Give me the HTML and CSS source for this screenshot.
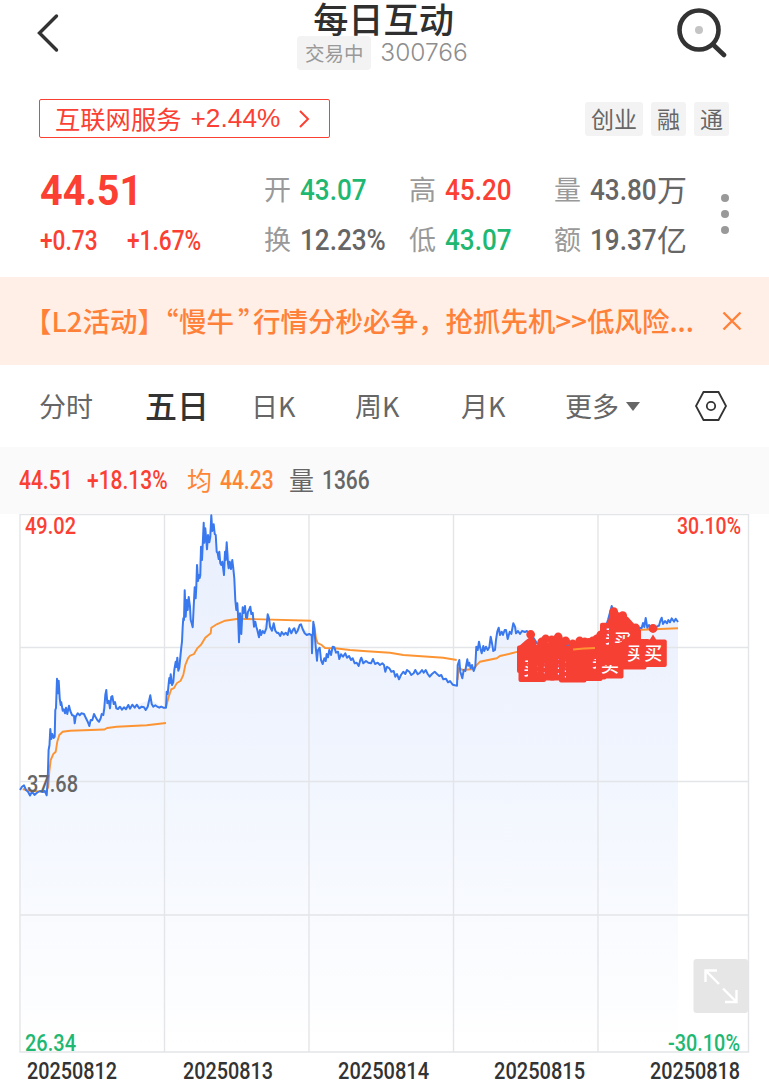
FILE: index.html
```html
<!DOCTYPE html>
<html lang="zh-CN">
<head>
  <meta charset="UTF-8">
  <title>每日互动 300766</title>
  <link rel="stylesheet" href="styles.css">
</head>
<body>

  <header class="top-bar">
    <svg class="back-icon" width="24" height="40" viewBox="0 0 24 40">
      <path d="M20.500 3 L3.500 20 L20.500 37" />
    </svg>
    <div class="stock-title">
      <h1>每日互动</h1>
      <div class="stock-sub">
        <span class="trade-status">交易中</span>
        <span class="stock-code">300766</span>
      </div>
    </div>
    <svg class="search-icon" width="54" height="54" viewBox="0 0 54 54">
      <circle class="ring" cx="25" cy="26" r="19.5" />
      <path d="M39.500 41 L50 51" />
      <circle class="dot" cx="25" cy="26" r="4" />
    </svg>
  </header>

  <div class="tag-row">
    <div class="sector">
      <span class="sector-name">互联网服务</span>
      <span class="sector-change">+2.44%</span>
      <svg width="12" height="20" viewBox="0 0 12 20"><path d="M2 2 L10 10 L2 18" /></svg>
    </div>
    <div class="tags">
      <span>创业</span>
      <span>融</span>
      <span>通</span>
    </div>
  </div>

  <section class="quote">
    <div class="price-box">
      <div class="price"><span class="num">44.51</span></div>
      <div class="change">
        <span class="num">+0.73</span>
        <span class="num">+1.67%</span>
      </div>
    </div>
    <div class="quote-grid">
      <label>开</label><span class="num green">43.07</span>
      <label>高</label><span class="num red">45.20</span>
      <label>量</label><div class="with-unit"><span class="num">43.80</span><b>万</b></div>
      <label>换</label><span class="num">12.23%</span>
      <label>低</label><span class="num green">43.07</span>
      <label>额</label><div class="with-unit"><span class="num">19.37</span><b>亿</b></div>
    </div>
    <div class="more-dots"><i></i><i></i><i></i></div>
  </section>

  <div class="banner">
    <p>【L2活动】<span class="quote-open">“</span>慢牛<span class="quote-close">”</span>行情分秒必争，抢抓先机&gt;&gt;低风险...</p>
    <svg width="20" height="20" viewBox="0 0 20 20"><path d="M1.500 1.500 L18.500 18.500 M18.500 1.500 L1.500 18.500" /></svg>
  </div>

  <nav class="tabs">
    <a>分时</a>
    <a class="active">五日</a>
    <a>日K</a>
    <a>周K</a>
    <a>月K</a>
    <a class="more">更多<i></i></a>
    <svg width="34" height="32" viewBox="0 0 34 32">
      <path d="M9.500 2 H24.500 L32 16 L24.500 30 H9.500 L2 16 Z" />
      <circle cx="17" cy="16" r="4.200" />
    </svg>
  </nav>

  <div class="info-bar">
    <span class="num red info-price">44.51</span>
    <span class="num red info-change">+18.13%</span>
    <span class="orange info-label">均</span>
    <span class="num orange info-avg">44.23</span>
    <span class="info-label">量</span>
    <span class="num">1366</span>
  </div>

  <svg class="chart" width="769" height="570" viewBox="0 514 769 570">
    <defs>
      <linearGradient id="area" x1="0" y1="514" x2="0" y2="1052" gradientUnits="userSpaceOnUse">
        <stop offset="0" stop-color="#e9effd" />
        <stop offset="0.4" stop-color="#eff4fe" />
        <stop offset="1" stop-color="#ffffff" />
      </linearGradient>
      <g id="buy">
        <circle cx="13.700" cy="-11" r="4.400" />
        <path d="M10 1 L13.700 -5 L17.500 1 Z" />
        <rect width="27.500" height="27.500" rx="2" />
        <text x="5" y="20.500">买</text>
      </g>
    </defs>

    <path class="area" d="M20 790 L26 790 30 795 46.700 795 48.600 750 50.300 729 54.700 737 57 679 60.700 705 67.300 714 74.700 717 84 714 89.300 726 100 718 106.300 692 110 706 116 706 130 707 150 700 166 707.700 170 683 177.300 661 181.300 647 184.700 600 188.700 600 192.700 627 197 570 201 550 203.700 527 207 545 211.300 520 216.700 551.700 221.300 565 226.700 545 233.300 568 236.300 610 240 618 250 608 259 635 267.700 618 273 628 280 635 301 626 311.700 635 314 630 317 658 322.700 663 332.700 647 345 655 358 665 361 658 380 665 399 678 420 671 440 676 457 685.700 459.300 662 462.300 677 467.300 661 473.700 670 476.300 647 493.300 650 498.700 630 507.700 638 513.300 625 527 632 540 645 585 647 600 635 611.700 608 630 627 645 625 678 622 V1052 H20 Z" />

    <g class="grid">
      <path d="M20 514.500 H748.500 V1052 H20 Z" />
      <path d="M20 647.500 H748 M20 781.500 H748 M20 915 H748" />
      <path d="M164.500 514 V1052 M309 514 V1052 M453.500 514 V1052 M598 514 V1052" />
    </g>

    <g class="avg-line">
      <path d="M22.700 789 L30 791 46 791.700 48.300 786.700 49.300 771.700 50.700 760 53.300 754 55.700 751.700 57.300 741.700 59.300 735 62.700 731.700 70 730.700 104.300 729.500 107.300 728 116.700 726.700 146.700 725.300 166 723" />
      <path d="M166 707 L168.700 696.700 171.300 689.300 174 688 176.700 683.300 180.700 680.700 183.300 675 185.300 665 188 658.300 190 655.700 194 654 197.300 648.300 201.300 644.300 205.300 637.700 210.700 633.300 211.300 627.700 216.700 624.300 225 620.700 238.300 618.700 311.300 620.700" />
      <path d="M314 624 L316 638.300 317.700 643 321.700 645 325 648 335 648.300 350 650 366.700 651.300 390 652.700 403.300 655 443.300 657.700 456.700 660" />
      <path d="M457.500 680 L458.700 668.300 463.300 670 473.300 669 476.700 665 480 661.700 496.700 658.300 500 656 511.700 653.300 518 651.700 545 651" />
      <path d="M636 630 L678 628.300" />
    </g>

    <g class="price-line">
      <path d="M20 790 L22 786.700 24 785.300 26 790 28 791.700 30 795.500 32 791.700 34.500 795 37.300 792.500 40 791 42.700 792 44.700 791 46.700 795.300 47.700 780 48.600 750 49.500 745 50.300 729 51.300 739 52.300 734 53.700 738 54.700 736.700 55.300 710 56 708 57 678.700 57.700 693.300 58.700 680.700 59.700 698.300 60.700 705 61.300 702.300 62.700 710.700 63.700 709.300 65 713.300 66 707.700 67.300 714 69 705.700 70.300 711 72 715 74 716 74.700 723.300 75.700 716.700 77.700 713.300 79.700 715.300 81.300 713.300 84 714 86 718.300 87.700 721.700 89.300 726 90.700 720 92.300 720.300 94 714 95.700 717.300 97.300 720 99 721.700 100.700 718.300 101.700 714 103.300 715 104.300 708.300 105.300 695 106.300 690 107.300 703.300 108.700 700.700 110 708.300 111.300 696.700 112.300 696 113.700 704 115 702 116.300 708.300 118 709 120 706.700 122 709.700 124 707.300 126 709.300 128.300 705 130 708.700 132.300 704.700 134.700 707.700 136.700 704.700 139.300 708.300 141.700 706.700 144 707.300 145.700 710 147.700 706.700 150.300 695.300 151.700 704 153.300 706.700 155.300 705.300 157.300 706.700 159.300 707.700 161.300 706.700 163.300 707.700 166 707.700 166.700 691.700 167.700 694 168.700 683.300 169.300 678 170 683 170.700 674.300 172 685 173.300 682 174.300 670 175.700 661.700 176.500 667 177.300 657.700 178.300 670.700 179.300 668 180.700 653.300 181.300 647.300 182 641.700 182.700 626.700 183.300 618.300 184 620 184.700 590.300 185.700 616.700 186.700 600 187.700 610 188.700 597 190 606.700 190.700 620 191.700 623.300 192.700 627.300 193.700 606.700 194.700 587.300 195.700 598.300 196.300 586.700 197 565 198 581 199 575 199.700 578 200.300 575 201 546.700 202 560 202.700 545 203.700 522.700 204.300 542.700 205.300 528.300 206.300 540 207 549.300 208 535 209.300 542.300 210.300 536.700 211.300 515.300 212.300 531 213.700 524.300 214.700 534 215.700 535 216.700 551.700 217.700 553.300 218.700 559 219.300 551.700 220.300 563.300 221.300 565 222.300 561.700 224 575 225 551.700 225.700 560 226.700 542.300 228 563.300 228.700 568.300 229.700 561.700 231 569 232.300 560 233.300 568.300 234.300 578.300 235.300 600 236.300 610 237.300 603.300 238 614 239 642.300 240 613.300 241.300 634 242 620 242.700 607.300 243.700 613 245 606 246 617.300 247 618 248 611.700 249 610 250.300 606.700 251.300 614 252.700 612.700 254 626.700 255.300 621.700 256.300 626.700 257.300 630 259 637.300 260 630 261 635 262.700 631 264.300 633.300 266.300 628.300 267.700 614.300 269 618.300 270 626.700 272 630.700 273.700 623.300 275.300 630.700 277 633 278.300 632.700 280.300 636 281.700 632 283.700 634.700 285.700 632.700 287.700 635 289.300 628.300 291.300 633.300 293.300 629.300 294.300 628.300 296 633.300 297.700 630.700 299.700 625 301 624.300 302.700 629.300 304.700 633.300 306.700 635 309.300 634 311.700 635.300 312 653.300 313.300 621.700 314.300 628.300 315.700 646.700 317 660.700 318 650 319.700 647.700 321 660 322.700 664 324.300 658.300 325.700 661 326.700 654 328 657.300 329.300 650 331 655 332.700 646.700 334.300 647.300 336 652.700 338 651.700 339.300 659 341 654.300 343 656.700 345.300 653.300 347 657.700 349 656 351 660 352.700 658.300 354.700 663.300 356.700 662.700 358.700 666 360.300 660 361.300 657.700 363.300 663.300 366 661 368.300 662.700 371 663.300 373 659 375 664 377.700 662.700 380 665 382.300 663.300 384 665 385.300 671.700 387 666.700 389.300 668.300 391.300 671.700 393.700 671 395.300 676.700 397 674 399 679.300 401 675 403.300 671.700 405.300 674 407 670 409.300 671.700 411.300 675 413.700 673.300 415.300 670 417.700 674.300 420 672.700 422 670 423.700 672.700 425.700 670 427.700 674 429.700 676.700 432 674 434.700 671.700 437 674 439.300 676 441.300 675 443.300 679.300 446 678.700 448 682.300 450 681 452.700 684.700 455 685.300 457 685.700 457.700 665 459.300 660 460.300 671.700 462.300 678.300 463.700 670 465.300 671 466.300 665 467.300 659.300 468.300 665.700 469.300 662.700 470.700 668.300 472 665 473.700 671 475.300 666.700 476.300 646.700 477.700 650 479 641.700 480.300 648.300 481.700 653.300 483.300 646 484.300 651 486 646.700 487.700 650 489.300 647.300 490.700 636.700 492 643.300 493.300 651 495 650 496 640 497.300 631.700 498.700 627.700 500 635 501.700 631.700 503 635 504.700 630 506 630 507.700 639 509.700 631.700 511.300 634 513.300 623.300 515 626.700 516 633.300 518 631 520 634 522 631 525 632 527 631 530 635 533 637 536.700 643 541 646 550 644 560 646 570 645 578 648 585 645 595 642 604 632 608 620 611.700 606 614 612 618 618 622 614 627.700 623 630 627 638 628 641.700 628 643 623 644.300 627 645.700 618 647.300 627.700 649 625 651.700 628.300 656.700 626.700 659 625.700 660.300 621 661.700 617.700 663 624 665 621 667 623.300 668.300 620 670 622.300 671.700 618.300 674 621.700 675.700 618.700 678 622" />
    </g>

    <g class="markers">
      <use href="#buy" x="517" y="645.500" />
      <use href="#buy" x="518.500" y="654.500" />
      <use href="#buy" x="528" y="653" />
      <use href="#buy" x="532" y="650" />
      <use href="#buy" x="538" y="651" />
      <use href="#buy" x="544.500" y="648" />
      <use href="#buy" x="549" y="653" />
      <use href="#buy" x="552" y="652" />
      <use href="#buy" x="559" y="655" />
      <use href="#buy" x="566" y="652" />
      <use href="#buy" x="571" y="653" />
      <use href="#buy" x="575" y="653.500" />
      <use href="#buy" x="579" y="652" />
      <use href="#buy" x="583" y="650" />
      <use href="#buy" x="587" y="646" />
      <use href="#buy" x="596" y="651" />
      <path class="cluster" d="M518 647 L526 640 533 635 536 645 544 642 552 643 559 637 564 645 573 647 580 642 588 645 597 638 603 628 V659 H518 Z M603 638 L610 614 618 612 628 617 637 627 641 630 V642 L619 646 V664 H603 Z" />
      <use href="#buy" x="600" y="622.700" />
      <use href="#buy" x="609" y="626.700" />
      <path class="cluster" d="M599 645 H619 V665 H599 Z" />
      <use href="#buy" x="619" y="642" />
      <use href="#buy" x="622" y="639" />
      <use href="#buy" x="639.300" y="639.500" />
      <path class="avg-over" d="M573 649.500 L584 648.500 L595 648" />
    </g>

    <g class="axis">
      <text class="up" x="25" y="534" textLength="51" lengthAdjust="spacingAndGlyphs">49.02</text>
      <text class="up" x="677" y="534" textLength="64" lengthAdjust="spacingAndGlyphs">30.10%</text>
      <text class="mid" x="27" y="792" textLength="51" lengthAdjust="spacingAndGlyphs">37.68</text>
      <text class="down" x="25" y="1050.500" textLength="51" lengthAdjust="spacingAndGlyphs">26.34</text>
      <text class="down" x="668" y="1050.500" textLength="72" lengthAdjust="spacingAndGlyphs">-30.10%</text>
    </g>

    <g class="dates">
      <text x="27" y="1078.500" textLength="90" lengthAdjust="spacingAndGlyphs">20250812</text>
      <text x="183" y="1078.500" textLength="90" lengthAdjust="spacingAndGlyphs">20250813</text>
      <text x="338" y="1078.500" textLength="91" lengthAdjust="spacingAndGlyphs">20250814</text>
      <text x="494" y="1078.500" textLength="91" lengthAdjust="spacingAndGlyphs">20250815</text>
      <text x="650" y="1078.500" textLength="90" lengthAdjust="spacingAndGlyphs">20250818</text>
    </g>

    <g class="expand">
      <rect x="693.500" y="959" width="54.500" height="54" rx="3" />
      <path d="M719 984 L705.500 970.500 M705.500 982 V970.500 H717 M723 988.500 L736.500 1002 M736.500 990 V1002 H725" />
    </g>
  </svg>

</body>
</html>
```
FILE: styles.css
```css
* {
  margin: 0;
  padding: 0;
  box-sizing: border-box;
}

body {
  width: 769px;
  background-color: #fff;
  color: #666;
  font-family: "Noto Sans CJK SC", sans-serif;
  overflow: hidden;
}

svg {
  display: block;
  flex-shrink: 0;
  fill: none;
}

/* narrow digits */
.num {
  display: block;
  font-family: Roboto, sans-serif;
  font-weight: 500;
  white-space: nowrap;
  transform: scaleX(0.84);
  transform-origin: left center;
}

.red {
  color: #fb4033;
}

.green {
  color: #1fb872;
}

.orange {
  color: #ff8534;
}

/* header */
.top-bar {
  display: flex;
  justify-content: space-between;
  height: 85px;
  padding: 0 41px 0 36px;
}

.back-icon {
  margin-top: 13px;
  stroke: #333;
  stroke-width: 3.4;
  stroke-linecap: round;
}

.stock-title {
  display: flex;
  flex-direction: column;
  align-items: center;
  margin-left: 31px;
}

.stock-title h1 {
  margin-left: 2px;
  font-size: 35.2px;
  font-weight: 500;
  line-height: 35px;
  color: #2f2f2f;
}

.stock-sub {
  display: flex;
  align-items: center;
  gap: 9px;
}

.trade-status {
  width: 74px;
  height: 34px;
  border-radius: 4px;
  background-color: #f3f3f3;
  color: #999;
  font-size: 19.5px;
  line-height: 34px;
  text-align: center;
}

.stock-code {
  font-family: Inter, sans-serif;
  font-size: 24.5px;
  font-weight: 300;
  line-height: 35px;
  color: #8e8e8e;
}

.search-icon {
  margin-top: 4px;
  stroke: #333;
  stroke-width: 4.6;
  stroke-linecap: round;
}

.search-icon .dot {
  fill: #c4c4c4;
  stroke: none;
}

/* sector + tags */
.tag-row {
  display: flex;
  justify-content: space-between;
  align-items: center;
  height: 67px;
  padding: 0 40px 0 39px;
}

.sector {
  display: flex;
  align-items: center;
  width: 291px;
  height: 39px;
  padding-left: 15px;
  border: 1px solid #fb4033;
  border-radius: 2px;
  color: #fb4033;
}

.sector-name {
  font-size: 25.3px;
  line-height: 34px;
  margin-top: -2px;
}

.sector-change {
  width: 107px;
  margin-left: 9px;
  font-family: "Liberation Sans", sans-serif;
  font-size: 26.3px;
}

.sector svg {
  stroke: #fb4033;
  stroke-width: 2;
}

.tags {
  display: flex;
  gap: 8px;
}

.tags span {
  height: 34px;
  padding: 0 6px;
  border-radius: 3px;
  background-color: #f3f3f3;
  font-size: 23px;
  line-height: 32px;
}

/* quote */
.quote {
  display: flex;
  height: 125px;
  padding: 13px 40px 0;
}

.price-box {
  width: 224px;
  color: #fb4033;
}

.price {
  height: 52px;
  font-size: 42px;
  line-height: 52px;
}

.price .num {
  font-weight: 700;
  transform: scaleX(0.94);
}

.change {
  display: flex;
  height: 46px;
  font-size: 27px;
  line-height: 48px;
}

.change .num {
  width: 87px;
}

.quote-grid {
  display: grid;
  grid-template-columns: 36px 109px 36px 109px 36px 100px;
  grid-template-rows: 50px 50px;
  align-items: center;
  font-size: 30px;
  line-height: 50px;
  height: 100px;
}

.quote-grid .num {
  transform: scaleX(0.87);
}

.quote-grid label {
  margin-top: -2px;
  font-size: 27px;
  color: #999;
}

.with-unit {
  display: flex;
}

.with-unit .num {
  width: 67px;
}

.with-unit b {
  margin-top: -2px;
  font-weight: 400;
}

.more-dots {
  display: flex;
  flex-direction: column;
  gap: 8px;
  margin: 29px 0 0 31px;
}

.more-dots i {
  width: 8px;
  height: 8px;
  border-radius: 50%;
  background-color: #999;
}

/* banner */
.banner {
  display: flex;
  justify-content: space-between;
  align-items: center;
  height: 88px;
  padding: 0 27px 0 24px;
  background-color: #ffefe6;
  color: #ff8139;
}

.banner p {
  font-size: 27.5px;
  font-weight: 500;
  line-height: 40px;
  margin-top: -2px;
  white-space: nowrap;
}

.quote-open {
  display: inline-block;
  width: 28px;
  margin-left: -14px;
}

.quote-close {
  display: inline-block;
  width: 19px;
  padding-left: 4px;
}

.banner svg {
  stroke: #ff8139;
  stroke-width: 2.4;
}

/* tabs */
.tabs {
  display: grid;
  grid-template-columns: 106px 106px 104px 106px 104px 129px 34px;
  align-items: center;
  height: 82px;
  padding-left: 39px;
}

.tabs a {
  font-size: 27px;
  line-height: 40px;
}

.tabs .active {
  margin-top: -4px;
  font-size: 32px;
  font-weight: 500;
  color: #333;
}

.tabs .more {
  display: flex;
  align-items: center;
}

.more i {
  margin-left: 7px;
  border: 7px solid transparent;
  border-top: 9px solid #666;
  border-bottom: 0;
}

.tabs svg {
  stroke: #333;
  stroke-width: 1.8;
}

/* info bar */
.info-bar {
  display: flex;
  align-items: center;
  height: 67px;
  padding-left: 19px;
  background-color: #fafafa;
  font-size: 25px;
}

.info-price {
  width: 68px;
}

.info-change {
  width: 100px;
}

.info-label {
  width: 33px;
  margin-top: -4px;
}

.info-avg {
  width: 69px;
}

/* chart */
.grid {
  stroke: #e4e5e8;
  stroke-width: 1.4;
}

.area {
  fill: url(#area);
}

.price-line {
  stroke: #3a78ee;
  stroke-width: 2;
  stroke-linejoin: round;
}

.avg-line,
.avg-over {
  stroke: #fd9433;
  stroke-width: 1.9;
}

.markers use,
.cluster {
  fill: #f74034;
}

#buy text {
  fill: #fff;
  font-size: 18px;
  font-weight: 500;
}

.axis {
  font-family: Roboto, sans-serif;
  font-size: 24px;
  font-weight: 500;
}

.up {
  fill: #fb4033;
}

.mid {
  fill: #666;
}

.down {
  fill: #1fb872;
}

.dates {
  font-family: Roboto, sans-serif;
  font-size: 24px;
  font-weight: 500;
  fill: #333;
}

.expand rect {
  fill: #e6e6e6;
}

.expand path {
  stroke: #fff;
  stroke-width: 2.4;
}
```
